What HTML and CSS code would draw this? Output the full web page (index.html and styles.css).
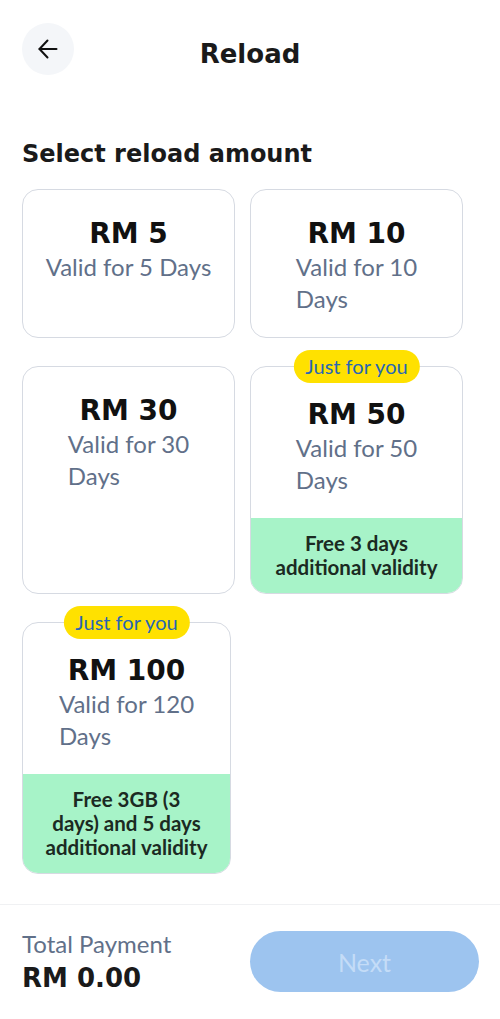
FILE: index.html
```html
<!DOCTYPE html>
<html lang="en">
<head>
  <meta charset="UTF-8">
  <meta name="viewport" content="width=device-width, initial-scale=1.0">
  <title>Reload</title>
  <link rel="stylesheet" href="styles.css">
</head>
<body>
  <div class="page">
    <!-- Header -->
    <header class="header">
      <button class="back-btn" aria-label="Back">
        <svg width="24" height="24" viewBox="0 0 24 24" fill="none" stroke="#111" stroke-width="2" stroke-linecap="round" stroke-linejoin="round">
          <path d="M20.5 12H3.5"/>
          <path d="M11.5 3.5L3.5 12l8 8.5"/>
        </svg>
      </button>
      <h1 class="title">Reload</h1>
      <span></span>
    </header>

    <main class="content">
      <h2 class="section-title">Select reload amount</h2>

      <div class="amounts">
        <div class="card">
          <div class="card-body">
            <div class="amount">RM 5</div>
            <div class="valid-wrap"><span class="valid">Valid for 5 Days</span></div>
          </div>
        </div>

        <div class="card">
          <div class="card-body">
            <div class="amount">RM 10</div>
            <div class="valid-wrap"><span class="valid">Valid for 10<br>Days</span></div>
          </div>
        </div>

        <div class="card">
          <div class="card-body">
            <div class="amount">RM 30</div>
            <div class="valid-wrap"><span class="valid">Valid for 30<br>Days</span></div>
          </div>
        </div>

        <div class="card has-badge">
          <span class="badge">Just for you</span>
          <div class="card-body">
            <div class="amount">RM 50</div>
            <div class="valid-wrap"><span class="valid">Valid for 50<br>Days</span></div>
          </div>
          <div class="bonus">Free 3 days<br>additional validity</div>
        </div>

        <div class="card has-badge card-narrow">
          <span class="badge">Just for you</span>
          <div class="card-body">
            <div class="amount">RM 100</div>
            <div class="valid-wrap"><span class="valid">Valid for 120<br>Days</span></div>
          </div>
          <div class="bonus">Free 3GB (3<br>days) and 5 days<br>additional validity</div>
        </div>
      </div>
    </main>

    <!-- Bottom bar -->
    <footer class="footer">
      <div class="total">
        <div class="total-label">Total Payment</div>
        <div class="total-value">RM 0.00</div>
      </div>
      <button class="next-btn" disabled>Next</button>
    </footer>
  </div>
</body>
</html>
```

FILE: styles.css
```css
/* General Styles */
body {
  margin: 0;
  padding: 0;
  background: #fff;
  color: #111;
  font-family: Lato, "Open Sans", sans-serif;
}

.page {
  display: flex;
  flex-direction: column;
  min-height: 100vh;
}

/* Header */
.header {
  display: grid;
  grid-template-columns: 52px 1fr 52px;
  align-items: start;
  padding: 23px 22px 0;
}

.back-btn {
  width: 52px;
  height: 52px;
  border: none;
  border-radius: 50%;
  background: #f4f6f9;
  display: flex;
  align-items: center;
  justify-content: center;
  padding: 0;
}

.title {
  margin: 14px 0 0;
  text-align: center;
  font-family: "DejaVu Sans", sans-serif;
  font-size: 26px;
  line-height: 34px;
  font-weight: bold;
  color: #1a1a1a;
}

/* Content */
.content {
  flex: 1;
  padding: 0 22px;
}

.section-title {
  margin: 64px 0 20px;
  font-family: "DejaVu Sans", sans-serif;
  font-size: 24px;
  line-height: 30px;
  font-weight: bold;
  color: #1a1a1a;
}

.amounts {
  display: grid;
  grid-template-columns: 213px 213px;
  column-gap: 15px;
  row-gap: 28px;
}

.card {
  position: relative;
  display: flex;
  flex-direction: column;
  border: 1px solid #d6dae2;
  border-radius: 16px;
  background: #fff;
}

.card-narrow {
  width: 207px;
}

.card-body {
  flex: 1;
  padding: 27px 0 22px;
}

.has-badge .card-body {
  padding-top: 31px;
}

.amount {
  text-align: center;
  font-family: "DejaVu Sans", sans-serif;
  font-size: 28px;
  line-height: 34px;
  font-weight: bold;
  color: #111;
}

.valid-wrap {
  text-align: center;
}

.valid {
  display: inline-block;
  text-align: left;
  font-size: 24px;
  line-height: 32px;
  color: #617089;
}

.badge {
  position: absolute;
  top: -17px;
  left: 50%;
  transform: translateX(-50%);
  background: #ffe100;
  color: #2766b5;
  font-size: 20px;
  line-height: 33px;
  padding: 0 12px;
  border-radius: 17px;
  white-space: nowrap;
}

.bonus {
  background: #a7f3c8;
  border-radius: 0 0 15px 15px;
  padding: 13px 6px 14px;
  text-align: center;
  font-size: 20.5px;
  line-height: 24px;
  font-weight: bold;
  color: #1b2a22;
}

/* Footer */
.footer {
  display: flex;
  justify-content: space-between;
  align-items: flex-start;
  border-top: 1px solid #f0f1f3;
  padding: 26px 21px 27px 22px;
}

.total-label {
  font-size: 24px;
  line-height: 26px;
  color: #617089;
}

.total-value {
  margin-top: 7px;
  font-family: "DejaVu Sans", sans-serif;
  font-size: 26px;
  line-height: 28px;
  font-weight: bold;
  color: #1a1a1a;
}

.next-btn {
  width: 229px;
  height: 61px;
  border: none;
  border-radius: 31px;
  background: #9dc4ef;
  color: #c4dcf7;
  font-family: Lato, sans-serif;
  font-size: 25px;
}
```
